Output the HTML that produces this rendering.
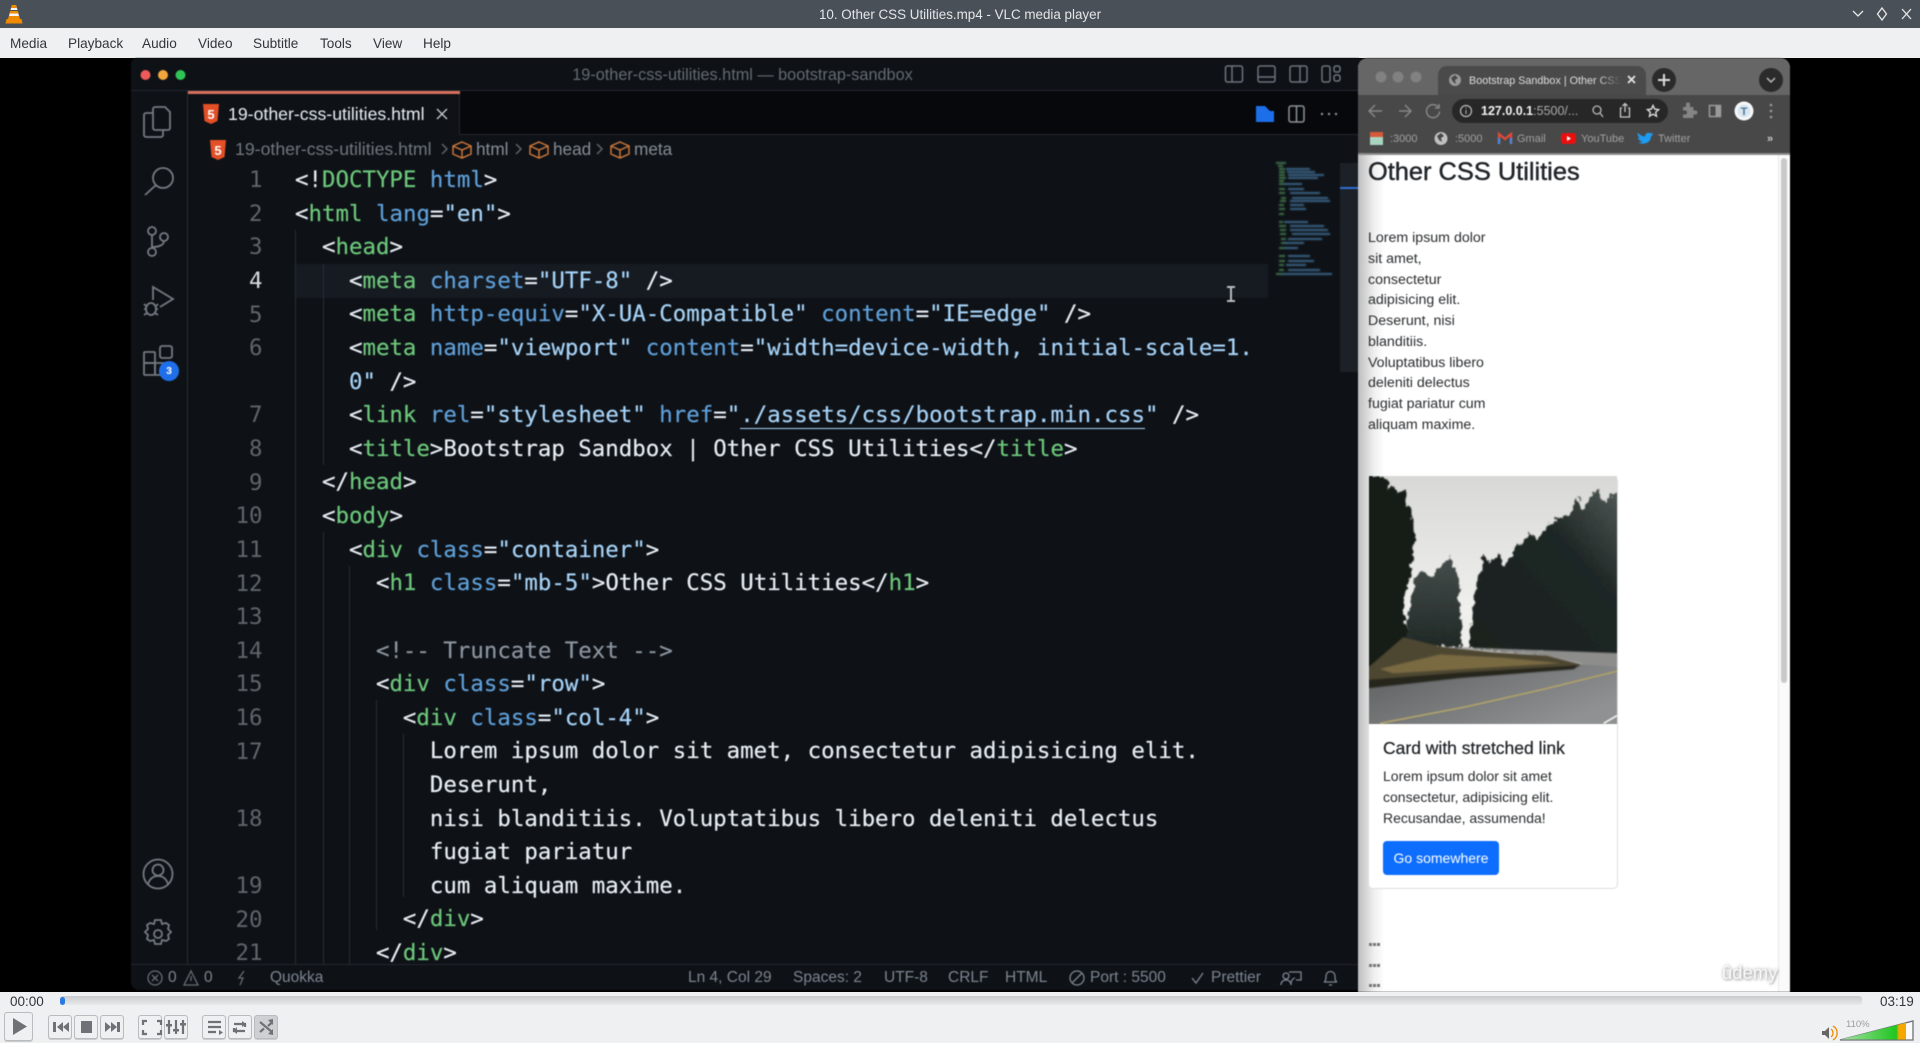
<!DOCTYPE html>
<html lang="en"><head><meta charset="utf-8"><title>10. Other CSS Utilities.mp4 - VLC media player</title>
<style>
html,body{margin:0;padding:0;width:1920px;height:1043px;overflow:hidden;background:#000;font-family:"Liberation Sans",sans-serif}
.a,.t{position:absolute}
.t{white-space:pre;line-height:20px}
svg{position:absolute;overflow:visible}
.m{top:34px;font-size:13.600px;color:#31363b}
#code{position:absolute;left:295px;top:164px;font:22.42px/33.62px "DejaVu Sans Mono","Liberation Mono",monospace;color:#e6edf3;white-space:pre;-webkit-text-stroke:.2px}
#code div{height:33.62px}
i{font-style:normal;color:#6cc77a}
b{font-weight:400;color:#5f9fd8}
u{text-decoration:none;color:#a6d2f6}
.n{position:absolute;width:60px;left:202.500px;text-align:right;font:22.42px/33.62px "DejaVu Sans Mono",monospace;color:#5f656c}
.st{top:968px;font-size:15.500px;color:#7d8590}
.g{position:absolute;width:1px;background:#272c33}
.bm{top:129px;font-size:11px;color:#a0a0a0}
.p{left:1368px;font-size:14.200px;color:#2a2c2f}
.btn{position:absolute;box-sizing:border-box;top:1015px;height:24px;width:24px;border:1px solid #b9bcbf;border-radius:3px;background:#eff0f1;box-shadow:0 1px 0 #ccc}
</style></head><body>
<div class="a" style="left:0;top:0;width:1920px;height:28px;background:#4a5058"></div>
<svg style="left:5px;top:4px" width="18" height="20" viewBox="0 0 18 20"><path d="M7 1h4l1.500 5h-7zM5 8h8l1 4H4z" fill="#f5f5f5"/><path d="M7 1h4l.8 3H6.200zM5.200 7h7.600l.7 2.500H4.500zM3.800 12h10.400l1 4H2.800z" fill="#f08a00"/><path d="M1.500 15h15l1 4.500H.5z" fill="#f08a00"/></svg>
<div class="t" style="left:0;width:1920px;text-align:center;top:4.500px;font-size:13.400px;color:#e4e6e8">10. Other CSS Utilities.mp4 - VLC media player</div>
<svg style="left:1850px;top:6px" width="64" height="16" fill="none" stroke="#e8e8e8" stroke-width="1.300"><path d="M3 5l5 5 5-5M32 2l4.500 6-4.500 6-4.500-6zM52 3l9 10M61 3l-9 10"/></svg>
<div class="a" style="left:0;top:28px;width:1920px;height:30px;background:#eff0f1"></div>
<div class="t m" style="left:10px">Media</div><div class="t m" style="left:68px">Playback</div><div class="t m" style="left:142px">Audio</div><div class="t m" style="left:198px">Video</div><div class="t m" style="left:253px">Subtitle</div><div class="t m" style="left:320px">Tools</div><div class="t m" style="left:373px">View</div><div class="t m" style="left:423px">Help</div>

<div class="a" style="left:0;top:0;width:1920px;height:1043px;filter:blur(.45px)">
<!-- EDITOR -->
<div class="a" style="left:131px;top:58px;width:1232px;height:932px;background:#0e1217;border-radius:6px 6px 8px 8px"></div>
<div class="a" style="left:131px;top:90px;width:1227px;height:1px;background:#23272e"></div>
<svg style="left:140px;top:69px" width="50" height="12"><circle cx="5.500" cy="6" r="5" fill="#ee5a5a"/><circle cx="23" cy="6" r="5" fill="#f2a63b"/><circle cx="40.500" cy="6" r="5" fill="#2fc455"/></svg>
<div class="t" style="left:0;width:1485px;text-align:center;top:65px;font-size:16.250px;color:#646a72">19-other-css-utilities.html — bootstrap-sandbox</div>
<svg style="left:1224px;top:64px" width="120" height="20" fill="none" stroke="#6d737b" stroke-width="1.500"><rect x="1.500" y="2" width="17" height="16" rx="2"/><path d="M8 2v16"/><rect x="34" y="2" width="17" height="16" rx="2"/><path d="M34 13h17"/><rect x="66" y="2" width="17" height="16" rx="2"/><path d="M76 2v16"/><rect x="98" y="2" width="8" height="16" rx="2"/><rect x="110" y="2" width="6" height="6" rx="2"/><rect x="110" y="11" width="6" height="6" rx="2"/></svg>
<div class="a" style="left:188px;top:91px;width:1170px;height:43px;background:#06080b"></div>
<div class="a" style="left:188px;top:134px;width:1170px;height:1px;background:#23272e"></div>
<div class="a" style="left:188px;top:91px;width:272px;height:44px;background:#0e1217;border-right:1px solid #23272e;box-sizing:border-box"></div>
<div class="a" style="left:188px;top:91px;width:272px;height:3px;background:#d9705c"></div>
<svg style="left:203px;top:104px" width="16" height="20" viewBox="0 0 16 20"><path d="M0 0h16l-1.500 17L8 20l-6.500-3z" fill="#e34f26"/><text x="8" y="15" font-size="13" font-weight="700" text-anchor="middle" fill="#fff" font-family="Liberation Sans">5</text></svg>
<div class="t" style="left:228px;top:104px;font-size:17.700px;color:#e6edf3">19-other-css-utilities.html</div>
<svg style="left:436px;top:108px" width="12" height="12" stroke="#c8ccd0" stroke-width="1.300"><path d="M1 1l10 10M11 1L1 11"/></svg>
<svg style="left:1254px;top:104px" width="90" height="20"><path d="M2 2h9l5 5h4v11H2z" fill="#1c6fe8"/><g fill="none" stroke="#8b929a" stroke-width="1.500"><rect x="35" y="2" width="15" height="16" rx="2"/><path d="M42.500 2v16"/></g><g fill="#8b929a"><circle cx="68" cy="10" r="1.200"/><circle cx="75" cy="10" r="1.200"/><circle cx="82" cy="10" r="1.200"/></g></svg>
<!-- breadcrumb -->
<svg style="left:210px;top:140px" width="16" height="20" viewBox="0 0 16 20"><path d="M0 0h16l-1.500 17L8 20l-6.500-3z" fill="#e34f26"/><text x="8" y="15" font-size="13" font-weight="700" text-anchor="middle" fill="#fff" font-family="Liberation Sans">5</text></svg>
<div class="t" style="left:235px;top:139px;font-size:17.700px;color:#70767e">19-other-css-utilities.html</div>
<svg style="left:440px;top:139px" width="200" height="20" fill="none" stroke="#c8743a" stroke-width="1.500"><path d="M22 3l9 4v8l-9 4-9-4V7zM13 7l9 4 9-4M22 11v8M99 3l9 4v8l-9 4-9-4V7zM90 7l9 4 9-4M99 11v8M180 3l9 4v8l-9 4-9-4V7zM171 7l9 4 9-4M180 11v8"/><path d="M2 5l5 5-5 5M76 5l5 5-5 5M157 5l5 5-5 5" stroke="#5c626a"/></svg>
<div class="t" style="left:476px;top:139px;font-size:17.200px;color:#868c94">html</div>
<div class="t" style="left:553px;top:139px;font-size:17.200px;color:#868c94">head</div>
<div class="t" style="left:634px;top:139px;font-size:17.200px;color:#868c94">meta</div>
<!-- activity -->
<div class="g" style="left:187px;top:91px;height:873px"></div>
<svg style="left:131px;top:100px" width="57" height="310" fill="none" stroke="#747a82" stroke-width="1.800"><path d="M24 7h10l5 5v16a2 2 0 0 1-2 2H24a2 2 0 0 1-2-2V9a2 2 0 0 1 2-2z"/><path d="M22 13h-7a2 2 0 0 0-2 2v20a2 2 0 0 0 2 2h15a2 2 0 0 0 2-2v-5"/><circle cx="32" cy="78" r="10"/><path d="M14 95l11-10"/><circle cx="21" cy="131" r="4"/><circle cx="21" cy="152" r="4"/><circle cx="33" cy="137" r="4"/><path d="M21 135v13M33 141c0 4-5 6-12 6"/><path d="M22 200v-13l20 12-13 8"/><ellipse cx="20" cy="209" rx="5" ry="6"/><path d="M13 204l3 3M13 209h3M13 215l3-2M27 204l-3 3M27 209h-3M27 215l-3-2"/><rect x="13" y="252" width="11" height="11" rx="1"/><rect x="13" y="263" width="11" height="12" rx="1"/><rect x="24" y="263" width="11" height="12" rx="1"/><rect x="29" y="246" width="12" height="12" rx="2"/></svg>
<div class="a" style="left:159px;top:361px;width:20px;height:20px;border-radius:50%;background:#1f6feb;color:#fff;font:700 10.500px/20px 'Liberation Sans';text-align:center">3</div>
<svg style="left:142px;top:857px" width="34" height="95" fill="none" stroke="#747a82" stroke-width="1.800"><circle cx="16" cy="17" r="14.500"/><circle cx="16" cy="13" r="5.500"/><path d="M6 27c2-6 6-8 10-8s8 2 10 8"/><path d="M13 63h6l1 4 4-1 3 2-1 4 3 3-3 3 1 4-3 2-4-1-1 4h-6l-1-4-4 1-3-2 1-4-3-3 3-3-1-4 3-2 4 1z"/><circle cx="16" cy="77" r="4"/></svg>
<!-- current line -->
<div class="a" style="left:295px;top:264px;width:973px;height:34px;background:#161b22"></div>
<!-- line numbers -->
<div class="n" style="top:164px">1<br>2<br>3<br><span style="color:#d8dce0">4</span><br>5<br>6<br><br>7<br>8<br>9<br>10<br>11<br>12<br>13<br>14<br>15<br>16<br>17<br><br>18<br><br>19<br>20<br>21</div>
<div class="g" style="left:295px;top:230px;height:734px"></div>
<div class="g" style="left:323px;top:264px;height:201px"></div>
<div class="g" style="left:323px;top:532px;height:432px"></div>
<div class="g" style="left:349px;top:566px;height:398px"></div>
<div class="g" style="left:376px;top:700px;height:230px"></div>
<div class="g" style="left:403px;top:734px;height:163px"></div>
<div id="code"><div>&lt;!<i>DOCTYPE</i> <b>html</b>&gt;</div><div>&lt;<i>html</i> <b>lang</b>=<u>"en"</u>&gt;</div><div>  &lt;<i>head</i>&gt;</div><div>    &lt;<i>meta</i> <b>charset</b>=<u>"UTF-8"</u> /&gt;</div><div>    &lt;<i>meta</i> <b>http-equiv</b>=<u>"X-UA-Compatible"</u> <b>content</b>=<u>"IE=edge"</u> /&gt;</div><div>    &lt;<i>meta</i> <b>name</b>=<u>"viewport"</u> <b>content</b>=<u>"width=device-width, initial-scale=1.</u></div><div><u>    0"</u> /&gt;</div><div>    &lt;<i>link</i> <b>rel</b>=<u>"stylesheet"</u> <b>href</b>=<u>"<span style="border-bottom:1.500px solid #a6d2f6">./assets/css/bootstrap.min.css</span>"</u> /&gt;</div><div>    &lt;<i>title</i>&gt;Bootstrap Sandbox | Other CSS Utilities&lt;/<i>title</i>&gt;</div><div>  &lt;/<i>head</i>&gt;</div><div>  &lt;<i>body</i>&gt;</div><div>    &lt;<i>div</i> <b>class</b>=<u>"container"</u>&gt;</div><div>      &lt;<i>h1</i> <b>class</b>=<u>"mb-5"</u>&gt;Other CSS Utilities&lt;/<i>h1</i>&gt;</div><div> </div><div><span style="color:#8b949e">      &lt;!-- Truncate Text --&gt;</span></div><div>      &lt;<i>div</i> <b>class</b>=<u>"row"</u>&gt;</div><div>        &lt;<i>div</i> <b>class</b>=<u>"col-4"</u>&gt;</div><div>          Lorem ipsum dolor sit amet, consectetur adipisicing elit.</div><div>          Deserunt,</div><div>          nisi blanditiis. Voluptatibus libero deleniti delectus</div><div>          fugiat pariatur</div><div>          cum aliquam maxime.</div><div>        &lt;/<i>div</i>&gt;</div><div>      &lt;/<i>div</i>&gt;</div></div>
<svg style="left:1224px;top:286px" width="14" height="16" fill="none" stroke="#b8bcc0" stroke-width="2"><path d="M3 1h8M3 15h8M7 1v14"/></svg>
<!-- minimap -->
<div class="a" style="left:1340px;top:163px;width:18px;height:209px;background:#1c2128"></div>
<div class="a" style="left:1340px;top:187px;width:18px;height:2px;background:#2f6fd0"></div>
<svg style="left:1276px;top:162px;filter:blur(.7px)" width="62" height="118" fill="none" stroke-width="1.800"><path stroke="#477f50" d="M0 1h10M2 4h5M3 7h6M3 10h6M3 13h6M3 16h7M3 19h5M3 22h6M3 27h6M3 31h6M5 36h5M4 39h6M3 43h5M3 47h6M3 52h5M3 60h4M3 64h7M4 68h6M4 72h6M5 77h5M5 81h6M3 86h5M3 94h6M3 99h6M3 103h5M3 108h5M0 112h7"/><path stroke="#436f96" d="M10 7h24M11 10h28M12 13h36M12 16h30M8 22h18M12 27h16M14 31h30M16 36h36M14 39h40M14 43h14M14 47h16M8 60h24M14 64h34M14 68h38M16 72h38M12 77h34M8 81h20M8 86h14M12 94h22M12 99h26M10 103h20M12 108h32M6 112h50"/></svg>
<!-- status -->
<div class="a" style="left:131px;top:964px;width:1227px;height:1px;background:#23272e"></div>
<svg style="left:147px;top:969px" width="100" height="18" fill="none" stroke="#666c74" stroke-width="1.300"><circle cx="8" cy="9" r="7"/><path d="M5 6l6 6M11 6l-6 6M44 2l7 14H37zM44 7v5M97 2l-5 7h4l-3 7"/></svg>
<div class="t st" style="left:168px">0</div><div class="t st" style="left:204px">0</div>
<div class="t st" style="left:270px">Quokka</div>
<div class="t st" style="left:688px">Ln 4, Col 29</div><div class="t st" style="left:793px">Spaces: 2</div><div class="t st" style="left:884px">UTF-8</div><div class="t st" style="left:948px">CRLF</div><div class="t st" style="left:1005px">HTML</div><div class="t st" style="left:1090px">Port : 5500</div><div class="t st" style="left:1211px">Prettier</div>
<svg style="left:1068px;top:969px" width="280" height="18" fill="none" stroke="#7d8590" stroke-width="1.300"><circle cx="9" cy="9" r="7"/><path d="M4 14L14 4M124 9l4 5 7-10"/><path d="M221 3h12v8h-5M223 16c0-6 3-7 4-7M213 16c0-3 2-5 5-5s5 2 5 5"/><circle cx="218" cy="7" r="3"/><path d="M256 13c2-1 2-3 2-6a4.500 4.500 0 0 1 9 0c0 3 0 5 2 6zM261 16h3"/></svg>

<!-- BROWSER -->
<div class="a" style="left:1358px;top:58px;width:432px;height:934px;background:#fff;border-radius:10px 10px 0 0;overflow:hidden">
 <div class="a" style="left:0;top:0;width:432px;height:37px;background:#666"></div>
 <div class="a" style="left:80px;top:8px;width:208px;height:30px;background:#4a4a4a;border-radius:9px 9px 0 0"></div>
 <div class="a" style="left:0;top:37px;width:432px;height:59px;background:#484848"></div>
 <div class="a" style="left:0;top:95px;width:432px;height:2px;background:#8a8a8a"></div>
 <div class="a" style="left:94px;top:41px;width:216px;height:24px;background:#272727;border-radius:12px"></div>
 <div class="a" style="left:0;top:97px;width:27px;height:837px;background:linear-gradient(90deg,#bdbdbd,#f0f0f0 60%,#fff)"></div>
 <div class="a" style="left:423px;top:100px;width:6px;height:525px;background:#b4b4b4;border-radius:3px"></div>
 <div class="a" style="left:420px;top:97px;width:12px;height:837px;background:rgba(240,240,240,.35);border-left:1px solid #e8e8e8"></div>
</div>
<svg style="left:1358px;top:58px" width="432" height="100">
 <g fill="#818181"><circle cx="23" cy="19" r="5.500"/><circle cx="40" cy="19" r="5.500"/><circle cx="58" cy="19" r="5.500"/></g>
 <circle cx="97" cy="22" r="6" fill="#9a9a9a"/><path d="M93 20l4-3 3 3-3 2 1 4-3-2z" fill="#494949"/>
 <path d="M270 18l7 7M277 18l-7 7" stroke="#e4e4e4" stroke-width="1.800"/>
 <circle cx="306" cy="22" r="12" fill="#2b2b2b"/><path d="M306 16v12M300 22h12" stroke="#ddd" stroke-width="2"/>
 <circle cx="413" cy="22" r="12" fill="#2b2b2b"/><path d="M409 20l4 4 4-4" stroke="#bbb" stroke-width="1.500" fill="none"/>
 <g fill="none" stroke="#858585" stroke-width="1.500"><path d="M24 53H12M17 47l-6 6 6 6M41 53h12M47 47l6 6-6 6"/><path d="M80 49a6.500 6.500 0 1 0 1.500 4.500M81 46v4h-4"/></g>
 <circle cx="108" cy="53" r="5.500" fill="none" stroke="#bbb" stroke-width="1.200"/><path d="M108 52v4M108 49.500v1" stroke="#bbb"/>
 <g fill="none" stroke="#b8b8b8" stroke-width="1.300"><circle cx="239" cy="52" r="4"/><path d="M242 55l3 4"/></g>
 <g fill="none" stroke="#c8c8c8" stroke-width="1.300"><path d="M264 50h-1.500v9h9v-9H270M267 54v-8M264.500 48l2.500-2.500 2.500 2.500"/></g>
 <path d="M295 47.500l1.700 3.600 3.900.5-2.900 2.700.8 3.900-3.500-2-3.500 2 .8-3.900-2.900-2.700 3.900-.5z" fill="none" stroke="#ddd" stroke-width="1.400"/>
 <path d="M325 49h3v-2.500a2 2 0 0 1 4 0V49h3.500v3.500h2a2 2 0 0 1 0 4h-2V60H325v-3.500h2a2 2 0 0 0 0-4h-2z" fill="#858585"/>
 <rect x="351.500" y="47.500" width="11" height="11" fill="none" stroke="#999" stroke-width="1.500"/><rect x="357.500" y="47.500" width="5" height="11" fill="#999"/>
 <circle cx="386" cy="53" r="9.500" fill="#f4f8fb"/><circle cx="386" cy="53" r="6.500" fill="#dbe6ee"/><text x="386" y="57" font-size="11" font-weight="700" text-anchor="middle" fill="#4a7a9a" font-family="Liberation Sans">T</text>
 <g fill="#999"><circle cx="413" cy="47" r="1.300"/><circle cx="413" cy="53" r="1.300"/><circle cx="413" cy="59" r="1.300"/></g>
 <rect x="12" y="74" width="13" height="13" fill="#a8d4c0"/><rect x="12" y="74" width="13" height="5" fill="#d65a3a"/>
 <circle cx="83" cy="80.500" r="6.500" fill="#c0c0c0"/><path d="M79 78l4-3 3 3-3 2 1 4-3-2z" fill="#484848"/>
 <path d="M141 86V76l6 5 6-5v10" fill="none" stroke="#dc4a3a" stroke-width="2.300"/><path d="M141 86v-6M153 86v-6" stroke="#4a8ae0" stroke-width="2.300"/>
 <rect x="203" y="75" width="15" height="11" rx="3" fill="#e8100f"/><path d="M209 78v5l4-2.500z" fill="#fff"/>
 <path d="M280 75c3 2.500 5 3.500 7 3.500 0-3 3-5 6-3l2-1-1 2 1 0-2 2c0 5-5 8-10 7l-3-1c2 0 3 0 4-1-3-1-4-3-4-4h2c-2-1-3-3-2-5.500z" fill="#1d9bf0"/>
</svg>
<div class="t" style="left:1469px;top:71px;width:152px;overflow:hidden;font-size:10.800px;color:#dedede;-webkit-mask-image:linear-gradient(90deg,#000 85%,transparent)">Bootstrap Sandbox | Other CSS</div>
<div class="t" style="left:1481px;top:101px;font-size:12.500px;font-weight:700;color:#f4f4f4">127.0.0.1<span style="font-weight:400;color:#aaa">:5500/...</span></div>
<div class="t bm" style="left:1390px">:3000</div><div class="t bm" style="left:1455px">:5000</div><div class="t bm" style="left:1517px">Gmail</div><div class="t bm" style="left:1581px">YouTube</div><div class="t bm" style="left:1658px">Twitter</div><div class="t bm" style="left:1767px;color:#ccc;font-weight:700">»</div>
<div class="t" style="left:1368px;top:156px;line-height:32px;font-size:25.400px;color:#212529;-webkit-text-stroke:.45px #212529">Other CSS Utilities</div>
<div class="t p" style="top:228px">Lorem ipsum dolor</div><div class="t p" style="top:249px">sit amet,</div><div class="t p" style="top:270px">consectetur</div><div class="t p" style="top:290px">adipisicing elit.</div><div class="t p" style="top:311px">Deserunt, nisi</div><div class="t p" style="top:332px">blanditiis.</div><div class="t p" style="top:353px">Voluptatibus libero</div><div class="t p" style="top:373px">deleniti delectus</div><div class="t p" style="top:394px">fugiat pariatur cum</div><div class="t p" style="top:415px">aliquam maxime.</div>
<!-- card -->
<div class="a" style="left:1368px;top:476px;width:250px;height:413px;box-sizing:border-box;border:1px solid #dfdfdf;border-radius:5px;background:#fff"></div>
<svg style="left:1369px;top:476px;overflow:hidden" width="248" height="248" viewBox="27 48 743 742" preserveAspectRatio="none">
 <defs><linearGradient id="sky" x1="0" y1="0" x2="0" y2="1"><stop offset="0" stop-color="#d8d8d6"/><stop offset=".55" stop-color="#f0f0ee"/><stop offset="1" stop-color="#e8e8e6"/></linearGradient>
 <linearGradient id="road" x1="0" y1="0" x2="1" y2=".6"><stop offset="0" stop-color="#5c5e5f"/><stop offset="1" stop-color="#8f9192"/></linearGradient>
 <linearGradient id="fade" x1="0" y1="1" x2="1" y2="0"><stop offset="0" stop-color="#191f1e"/><stop offset=".65" stop-color="#1f2725"/><stop offset="1" stop-color="#535b59"/></linearGradient>
 <linearGradient id="mid" x1="0" y1="0" x2="0" y2="1"><stop offset="0" stop-color="#454e4c"/><stop offset="1" stop-color="#202826"/></linearGradient>
 <filter id="bl"><feGaussianBlur stdDeviation="2.500"/></filter>
 <filter id="tr" x="-5%" y="-5%" width="110%" height="110%"><feTurbulence type="fractalNoise" baseFrequency=".07 .05" numOctaves="2" seed="4"/><feDisplacementMap in="SourceGraphic" scale="26" xChannelSelector="R" yChannelSelector="G"/><feGaussianBlur stdDeviation="1.800"/></filter></defs>
 <rect x="27" y="48" width="743" height="742" fill="url(#sky)"/>
 <g filter="url(#tr)">
 <path d="M15 40L80 55 85 85 100 80 112 100 130 90 140 130 150 155 165 190 160 210 168 235 155 270 165 295 150 320 152 350 135 400 130 470 150 540 190 560 190 610 15 630Z" fill="#131b19"/>
 <path d="M140 470L150 430 165 360 185 335 205 345 225 340 245 320 272 288 290 340 298 370 295 420 305 480 300 560 140 560Z" fill="url(#mid)"/>
 <path d="M325 565L335 470 345 400 360 330 375 280 390 310 415 280 430 320 455 285 470 245 480 255 510 220 530 240 570 190 600 170 630 165 650 110 670 150 700 95 715 85 730 130 755 105 790 85 790 590 560 580Z" fill="url(#fade)"/>
 </g>
 <g filter="url(#bl)">
 <path d="M240 558L500 568 775 578 775 640 660 640 665 610 560 585Z" fill="#8d8d8b"/>
 <path d="M20 682L300 652 640 626 665 612 775 620 775 795 20 795Z" fill="url(#road)"/>
 <path d="M20 625L130 530 240 558 400 575 560 585 665 612 640 626 300 652 20 682Z" fill="#4e4630"/>
 <path d="M60 625L240 582 430 592 600 608 400 620 100 638Z" fill="#7a6a42"/>
 <path d="M20 658L300 636 660 614 640 627 300 653 20 684Z" fill="#26251e"/>
 </g>
 <path d="M60 788L320 738 550 686 770 632" fill="none" stroke="#a89c6e" stroke-width="6"/>
 <path d="M730 788L770 765" stroke="#e4e4e4" stroke-width="6"/>
</svg>
<div class="t" style="left:1383px;top:738px;font-size:17.500px;color:#212529;-webkit-text-stroke:.25px #212529">Card with stretched link</div>
<div class="t" style="left:1383px;top:766px;font-size:14px;color:#2a2c2f">Lorem ipsum dolor sit amet</div>
<div class="t" style="left:1383px;top:787px;font-size:14px;color:#2a2c2f">consectetur, adipisicing elit.</div>
<div class="t" style="left:1383px;top:808px;font-size:14px;color:#2a2c2f">Recusandae, assumenda!</div>
<div class="a" style="left:1383px;top:841px;width:116px;height:34px;background:#0d6efd;border-radius:4px;color:#fff;font-size:14px;line-height:34px;text-align:center">Go somewhere</div>
<svg style="left:1369px;top:943px" width="14" height="48" fill="#777"><path d="M0 0h3v3H0zM4 0h3v3H4zM8 0h3v3H8zM0 21h3v3H0zM4 21h3v3H4zM8 21h3v3H8zM0 41h3v3H0zM4 41h3v3H4zM8 41h3v3H8z"/></svg>
<div class="t" style="left:1722px;top:963px;font-size:18.500px;color:#fff;text-shadow:0 0 3px #999,1px 1px 2px #aaa">ûdemy</div>
</div>

<!-- VLC controls -->
<div class="a" style="left:0;top:992px;width:1920px;height:51px;background:#eff0f1"></div>
<div class="t" style="left:10px;top:992px;font-size:13.500px;color:#31363b">00:00</div>
<div class="a" style="left:60px;top:996px;width:1802px;height:9px;border-radius:3px;background:linear-gradient(#c9cacc,#e9eaeb)"></div>
<div class="a" style="left:60px;top:997px;width:5px;height:8px;border-radius:3px;background:#2a7ae2"></div>
<div class="t" style="left:1880px;top:992px;font-size:13.500px;color:#31363b">03:19</div>
<div class="btn" style="left:4px;top:1012px;width:29px;height:29px"></div>
<svg style="left:12px;top:1018px" width="16" height="20"><path d="M1 0l14 8.500L1 17z" fill="#6e7175"/></svg>
<div class="btn" style="left:48px"></div><div class="btn" style="left:74px"></div><div class="btn" style="left:100px"></div>
<div class="btn" style="left:138px"></div><div class="btn" style="left:164px"></div>
<div class="btn" style="left:202px"></div><div class="btn" style="left:228px"></div><div class="btn" style="left:254px;background:#cfd0d2"></div>
<svg style="left:48px;top:1015px" width="232" height="24" fill="#6e7175"><path d="M5 7h3v10H5zM9 12l6-5v10zM15 12l6-5v10zM33 6h11v12H33zM57 7l6 5-6 5zM63 7l6 5-6 5zM69 7h3v10h-3z"/><g fill="none" stroke="#6e7175" stroke-width="2.200"><path d="M95 10V6h4M109 6h4v4M113 15v4h-4M99 19h-4v-4"/><path d="M121 5v14M128 5v14M135 5v14"/><path d="M160 7h13M160 12h13M160 17h8M186 9h11v3M197 16h-11v-3M212 7l12 10M212 17l4-3.500M220 11l4-3.500"/></g><path d="M118 9h6v2.500h-6zM125 14h6v2.500h-6zM132 8h6v2.500h-6zM171 15l4 2.500-4 2.500zM194 6l4 3-4 3zM189 12l-4 4 4 3zM225 4v6l-5-5zM225 20v-6l-5 5z"/></svg>
<div class="t" style="left:1846px;top:1015px;font-size:9.500px;color:#9a9da0">110%</div>
<svg style="left:1820px;top:1018px" width="98" height="24"><path d="M20 22L93 3v19z" fill="#fafafa" stroke="#6e7175" stroke-width="1.300"/><path d="M21 21.500L86 4.800v16.700z" fill="url(#vg)"/><defs><linearGradient id="vg"><stop offset="0" stop-color="#a9dda9"/><stop offset=".85" stop-color="#1ec71e"/><stop offset=".89" stop-color="#f6a800"/><stop offset="1" stop-color="#f6a800"/></linearGradient></defs><path d="M2 13h3l4-4v12l-4-4H2z" fill="#666"/><path d="M11 11a5 5 0 0 1 0 8M13 8a8 8 0 0 1 0 14" fill="none" stroke="#f08a00" stroke-width="1.300"/></svg>
</body></html>
